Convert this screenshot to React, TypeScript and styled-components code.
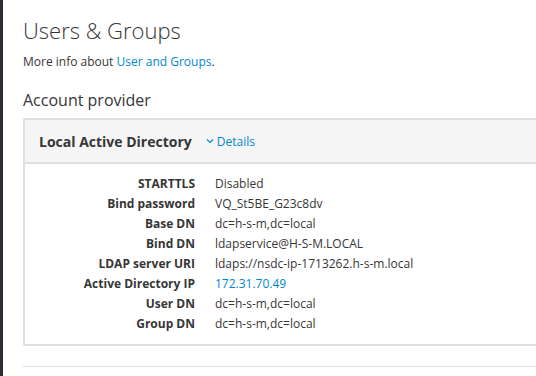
import styled, { createGlobalStyle } from "styled-components";

const GlobalStyle = createGlobalStyle`
  body {
    margin: 0;
    background: #fff;
    font-family: "Open Sans", "Liberation Sans", sans-serif;
    color: #363636;
  }
`;

const Page = styled.div`
  display: flex;
  min-height: 376px;
  border-left: 3px solid #292e34;
  box-sizing: border-box;
`;

const Content = styled.main`
  flex: 1;
  padding: 14px 0 0 20px;
  display: flex;
  flex-direction: column;
`;

const Title = styled.h1`
  margin: 0;
  font-size: 22px;
  font-weight: 300;
  line-height: 32px;
  color: #363636;
`;

const Lead = styled.p`
  margin: 7px 0 0;
  font-size: 12px;
  line-height: 18px;
`;

const Link = styled.a`
  color: #0088ce;
  text-decoration: none;
`;

const Section = styled.h2`
  margin: 17px 0 0;
  font-size: 16px;
  font-weight: 400;
  line-height: 24px;
`;

const Card = styled.section`
  margin-top: 6px;
  border: 2px solid #e0e0e0;
  border-right: none;
`;

const CardHeader = styled.header`
  display: flex;
  align-items: center;
  gap: 14px;
  height: 42px;
  padding-left: 14px;
  background: #f5f5f5;
  border-bottom: 2px solid #e0e0e0;
`;

const CardTitle = styled.h3`
  margin: 0;
  font-size: 14px;
  font-weight: 700;
`;

const Toggle = styled.a`
  display: flex;
  align-items: center;
  gap: 3px;
  font-size: 12px;
  color: #0088ce;
`;

const Details = styled.dl`
  margin: 0;
  padding: 10px 0;
  display: grid;
  grid-template-columns: 170px 1fr;
  column-gap: 20px;
  font-size: 12px;
  line-height: 20px;
`;

const Label = styled.dt`
  text-align: right;
  font-weight: 700;
`;

const Value = styled.dd<{ $link?: boolean }>`
  margin: 0;
  color: ${({ $link }) => ($link ? "#0088ce" : "#363636")};
`;

const Divider = styled.hr`
  margin: 20px 0 0;
  border: none;
  border-top: 1px solid #ddd;
`;

const rows: [string, string, boolean?][] = [
  ["STARTTLS", "Disabled"],
  ["Bind password", "VQ_St5BE_G23c8dv"],
  ["Base DN", "dc=h-s-m,dc=local"],
  ["Bind DN", "ldapservice@H-S-M.LOCAL"],
  ["LDAP server URI", "ldaps://nsdc-ip-1713262.h-s-m.local"],
  ["Active Directory IP", "172.31.70.49", true],
  ["User DN", "dc=h-s-m,dc=local"],
  ["Group DN", "dc=h-s-m,dc=local"],
];

export default function App() {
  return (
    <>
      <GlobalStyle />
      <Page>
        <Content>
          <Title>Users &amp; Groups</Title>
          <Lead>
            More info about <Link href="#">User and Groups</Link>.
          </Lead>
          <Section>Account provider</Section>
          <Card>
            <CardHeader>
              <CardTitle>Local Active Directory</CardTitle>
              <Toggle>
                <svg width="8" height="6" viewBox="0 0 8 6">
                  <path d="M1 1.5l3 3 3-3" fill="none" stroke="#0088ce" strokeWidth="1.2" />
                </svg>
                Details
              </Toggle>
            </CardHeader>
            <Details>
              {rows.map(([k, v, link]) => [
                <Label key={k}>{k}</Label>,
                <Value key={k + "v"} $link={link}>
                  {v}
                </Value>,
              ])}
            </Details>
          </Card>
          <Divider />
        </Content>
      </Page>
    </>
  );
}
